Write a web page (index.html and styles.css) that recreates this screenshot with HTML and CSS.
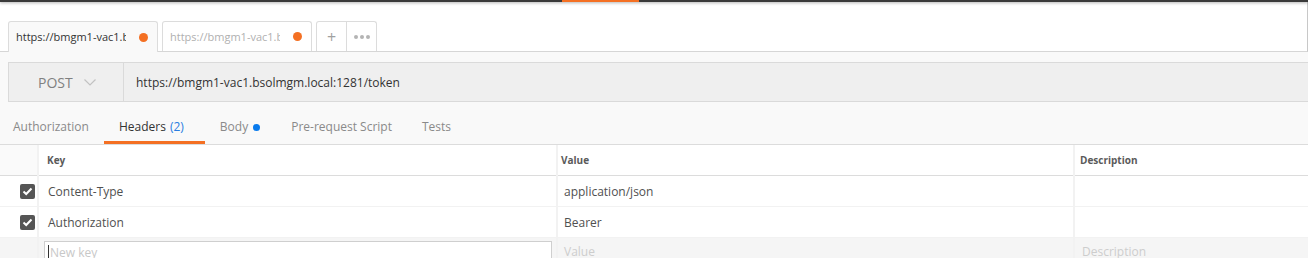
FILE: index.html
```html
<!DOCTYPE html>
<html lang="en">
<head>
    <meta charset="UTF-8">
    <title>Request</title>
    <link rel="stylesheet" href="styles.css">
</head>
<body>
    <div class="topbar"><span class="topbar-accent"></span></div>

    <!-- Request tabs -->
    <div class="tabstrip">
        <div class="tab active">
            <span class="tab-title">https://bmgm1-vac1.bsolmgm.local:1281/token</span>
            <span class="dot"></span>
        </div>
        <div class="tab">
            <span class="tab-title">https://bmgm1-vac1.bsolmgm.local:1281/token</span>
            <span class="dot"></span>
        </div>
        <div class="tab-tools">
            <span class="tool">+</span>
            <span class="tool more">
                <svg width="16" height="4" viewBox="0 0 16 4">
                    <circle cx="2" cy="2" r="2" fill="#b4b4b4"/>
                    <circle cx="8" cy="2" r="2" fill="#b4b4b4"/>
                    <circle cx="14" cy="2" r="2" fill="#b4b4b4"/>
                </svg>
            </span>
        </div>
    </div>

    <div class="main">
        <!-- URL bar -->
        <div class="urlbar">
            <div class="method">
                POST
                <svg class="chevron" width="12" height="7" viewBox="0 0 12 7">
                    <path d="M0.5 0.5 L6 6 L11.5 0.5" fill="none" stroke="#c2c2c2" stroke-width="1.2"/>
                </svg>
            </div>
            <div class="url">https://bmgm1-vac1.bsolmgm.local:1281/token</div>
        </div>

        <!-- Section tabs -->
        <div class="subtabs">
            <div class="subtab first">Authorization</div>
            <div class="subtab active">Headers <span class="count">(2)</span></div>
            <div class="subtab">Body <span class="blue-dot"></span></div>
            <div class="subtab">Pre-request Script</div>
            <div class="subtab">Tests</div>
        </div>

        <!-- Headers table -->
        <div class="table">
            <div class="cell chk head"></div>
            <div class="cell head key">Key</div>
            <div class="cell head value">Value</div>
            <div class="cell head desc">Description</div>

            <div class="cell chk"><span class="checkbox"><svg width="11" height="9" viewBox="0 0 11 9"><path d="M1.5 4.5 L4.2 7 L9.5 1.5" fill="none" stroke="#fff" stroke-width="2"/></svg></span></div>
            <div class="cell key">Content-Type</div>
            <div class="cell value">application/json</div>
            <div class="cell desc"></div>

            <div class="cell chk"><span class="checkbox"><svg width="11" height="9" viewBox="0 0 11 9"><path d="M1.5 4.5 L4.2 7 L9.5 1.5" fill="none" stroke="#fff" stroke-width="2"/></svg></span></div>
            <div class="cell key">Authorization</div>
            <div class="cell value">Bearer</div>
            <div class="cell desc"></div>

            <div class="cell new chk"></div>
            <div class="cell new key-input"><span class="input"><span class="caret"></span>New key</span></div>
            <div class="cell new value placeholder">Value</div>
            <div class="cell new desc placeholder">Description</div>
        </div>
    </div>
</body>
</html>
```

FILE: styles.css
```css
body {
    margin: 0;
    font-family: "Open Sans", Arial, sans-serif;
    font-size: 12px;
    color: #505050;
    background-color: #f9f9f9;
    overflow: hidden;
}

.topbar {
    height: 2px;
    background-color: #3a3a3a;
    box-shadow: 0 1px 3px rgba(0, 0, 0, 0.35);
    display: flex;
    position: relative;
    z-index: 1;
}

.topbar-accent {
    margin-left: 562px;
    width: 77px;
    height: 2px;
    background-color: #f47023;
}

/* Tab strip */
.tabstrip {
    height: 49px;
    background-color: #fff;
    border-bottom: 1px solid #d6d6d6;
    border-right: 1px solid #c8c8c8;
    display: flex;
    align-items: flex-end;
    padding-left: 8px;
    gap: 4px;
}

.tab {
    height: 29px;
    border: 1px solid #dcdcdc;
    border-bottom: none;
    border-radius: 3px 3px 0 0;
    display: flex;
    align-items: center;
    padding: 0 9px 0 7px;
    width: 132px;
    background-color: #fff;
    color: #b0b0b0;
    font-size: 11px;
}

.tab.active {
    background-color: #f9f9f9;
    color: #333;
    margin-bottom: -1px;
    height: 30px;
}

.tab-title {
    width: 110px;
    overflow: hidden;
    white-space: nowrap;
    line-height: 16px;
}

.dot {
    width: 9px;
    height: 9px;
    border-radius: 50%;
    background-color: #f47023;
    margin-left: auto;
}

.tab-tools {
    display: flex;
    height: 29px;
    border: 1px solid #dcdcdc;
    border-bottom: none;
    border-radius: 3px 3px 0 0;
}

.tool {
    width: 29px;
    display: flex;
    align-items: center;
    justify-content: center;
    color: #a0a0a0;
    font-size: 16px;
}

.tool.more {
    border-left: 1px solid #dcdcdc;
}

/* URL bar */
.main {
    padding-top: 10px;
}

.urlbar {
    margin-left: 8px;
    height: 38px;
    border: 1px solid #dadada;
    border-right: none;
    background-color: #efefef;
    display: flex;
    align-items: center;
}

.method {
    width: 115px;
    height: 38px;
    border-right: 1px solid #dadada;
    display: flex;
    align-items: center;
    padding-left: 29px;
    box-sizing: border-box;
    font-size: 14px;
    color: #808080;
}

.chevron {
    margin-left: 11px;
}

.url {
    padding-left: 12px;
    color: #333;
}

/* Section tabs */
.subtabs {
    display: flex;
    height: 42px;
    border-bottom: 1px solid #dcdcdc;
}

.subtab {
    padding: 16px 15px 5px;
    line-height: 18px;
    border-bottom: 3px solid transparent;
    color: #8a8a8a;
    display: flex;
    align-items: center;
}

.subtab.first {
    padding-left: 13px;
}

.subtab.active {
    color: #333;
    border-bottom-color: #f47023;
    padding-right: 21px;
}

.count {
    color: #2a7de1;
    margin-left: 4px;
}

.blue-dot {
    width: 7px;
    height: 7px;
    border-radius: 50%;
    background-color: #097bed;
    margin: 0 1px 0 5px;
}

/* Headers table */
.table {
    display: grid;
    grid-template-columns: 37px 517px 515px 1fr;
    grid-template-rows: 30px 30px 30px 22px;
    column-gap: 2px;
    row-gap: 1px;
    background-color: #f2f2f2;
    overflow: hidden;
}

.cell {
    background-color: #fff;
    display: flex;
    align-items: center;
    color: #505050;
}

.cell.key {
    padding-left: 9px;
}

.cell.value {
    padding-left: 6px;
}

.cell.desc {
    padding-left: 7px;
}

.cell.head {
    font-size: 10px;
    font-weight: 700;
    color: #5a5a5a;
    border-bottom: 1px solid #dcdcdc;
    margin-bottom: -1px;
}

.cell.head.key {
    padding-left: 8px;
}

.cell.head.value {
    padding-left: 3px;
}

.cell.head.desc {
    padding-left: 5px;
}

.cell.chk {
    justify-content: flex-end;
    padding-right: 2px;
}

.cell.chk.head {
    background-color: #fafafa;
}

.checkbox {
    width: 15px;
    height: 15px;
    border-radius: 2px;
    background-color: #555;
    display: flex;
    align-items: center;
    justify-content: center;
}

.cell.new {
    background-color: #f5f5f5;
    align-items: flex-start;
    padding-top: 5px;
    line-height: 18px;
    overflow: hidden;
}

.cell.new.key-input {
    padding: 3px 0 0 5px;
}

.input {
    width: 508px;
    height: 30px;
    box-sizing: border-box;
    border: 1px solid #cfcfcf;
    border-bottom: none;
    background-color: #fff;
    display: flex;
    align-items: flex-start;
    padding: 2px 0 0 3px;
    color: #c8c8c8;
}

.caret {
    width: 1px;
    height: 16px;
    margin-top: 1px;
    background-color: #333;
    margin-right: 1px;
}

.placeholder {
    color: #cdcdcd;
}
```
